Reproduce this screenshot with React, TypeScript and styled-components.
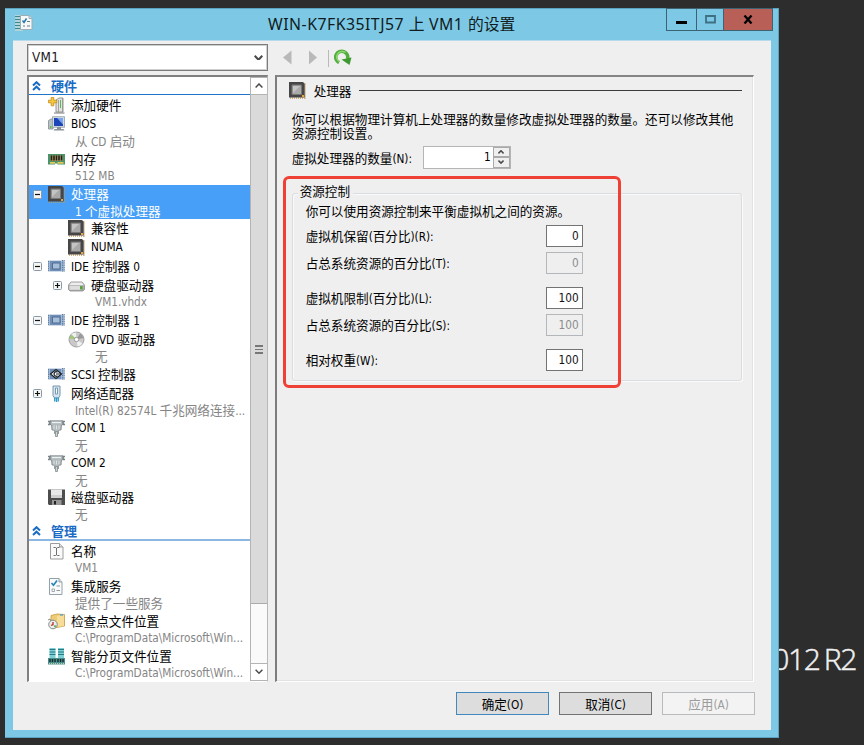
import React from 'react';
import styled, { createGlobalStyle, css } from 'styled-components';

const GlobalStyle = createGlobalStyle`
  * { box-sizing: border-box; }
  body {
    margin: 0;
    background: #2d2d2d;
    overflow: hidden;
    font-family: 'DejaVu Sans Condensed', 'DejaVu Sans', 'Noto Sans CJK SC', sans-serif;
    font-stretch: condensed;
    font-size: 12.6px;
    color: #000;
  }
`;

/* ---------- text ---------- */

const Cjk = styled.span`
  font-family: 'Noto Sans CJK SC', sans-serif;
  font-stretch: normal;
`;

const Latin = styled.span`
  font-size: 0.93em;
  letter-spacing: -0.02px;
`;

const Phrase = styled.span`
  white-space: pre;
`;

/* Chinese runs and Latin runs use different faces and sizes. */
function Mixed({ children }: { children: string }) {
  const runs = children.match(/[\u2e80-\uffef]+|[^\u2e80-\uffef]+/g) || [];
  return (
    <Phrase>
      {runs.map((run, i) =>
        /[\u2e80-\uffef]/.test(run) ? <Cjk key={i}>{run}</Cjk> : <Latin key={i}>{run}</Latin>
      )}
    </Phrase>
  );
}

/* ---------- desktop and window ---------- */

const Desktop = styled.div`
  position: relative;
  width: 864px;
  height: 745px;
  padding: 8px 0 0 5px;
  background: #2d2d2d;
  overflow: hidden;
`;

const Wallpaper = styled.div`
  position: absolute;
  right: 8px;
  top: 639px;
  font: 300 30px/40px 'Open Sans', 'Noto Sans', sans-serif;
  letter-spacing: -1.4px;
  word-spacing: -2px;
  color: #f0f0f0;
  -webkit-text-stroke: 0.5px #f0f0f0;
  white-space: nowrap;
`;

const Window = styled.div`
  position: relative;
  display: flex;
  flex-direction: column;
  width: 774px;
  height: 730px;
  padding: 0 7px 7px 8px;
  background: #7dc9e5;
  border: solid #5aa3bf;
  border-width: 1px 1px 1px 0;
`;

const TitleBar = styled.div`
  position: relative;
  display: flex;
  align-items: center;
  height: 31px;
  flex: none;
`;

const TitleIcon = styled.div`
  width: 18px;
  height: 18px;
  margin-left: 2px;
  margin-top: -3px;
`;

const Title = styled.div`
  flex: 1;
  margin-left: 235px;
  margin-top: -2px;
  font-family: 'Noto Sans', sans-serif;
  font-stretch: normal;
  font-size: 15.8px;
  line-height: 28px;
  color: #111b20;
  ${Latin} { font-size: 15.8px; letter-spacing: 0.5px; }
`;

const Controls = styled.div`
  display: flex;
  align-self: flex-start;
  height: 23px;
  margin-right: -2px;
  margin-top: -1px;
`;

const ControlButton = styled.div<{ $w: number; $close?: boolean }>`
  display: flex;
  align-items: center;
  justify-content: center;
  width: ${(p) => p.$w}px;
  border: 1px solid #3d6373;
  border-right-width: ${(p) => (p.$close ? 1 : 0)}px;
  background: ${(p) => (p.$close ? '#b86057' : '#7dc9e5')};
`;

const Client = styled.div`
  display: flex;
  flex-direction: column;
  flex: 1;
  min-height: 0;
  padding: 3px 17px 0 14px;
  background: #efefef;
  border-top: 1px solid #b5dcea;
`;

/* ---------- top strip ---------- */

const Strip = styled.div`
  display: flex;
  align-items: center;
  height: 27px;
`;

const Combo = styled.div`
  display: flex;
  align-items: center;
  justify-content: space-between;
  width: 241px;
  height: 27px;
  padding: 0 4px 0 4px;
  background: #fff;
  border: 1px solid #7c7c7c;
  box-shadow: inset 0 0 0 1px #d0d0d0;
  color: #1c1c1c;
  ${Latin} { font-size: 13.4px; letter-spacing: 0.3px; }
`;

const Nav = styled.div`
  display: flex;
  align-items: center;
  height: 20px;
  margin-left: 15px;
`;

const NavRule = styled.div`
  width: 1px;
  height: 17px;
  margin: 2px 5px 0 11px;
  background: #b9b9b9;
`;

/* ---------- panels ---------- */

const Panels = styled.div`
  display: flex;
  gap: 7px;
  height: 607px;
  margin-top: 4px;
`;

const TreePanel = styled.div`
  display: flex;
  width: 241px;
  border: solid #808080;
  border-width: 2px 1px 1px 2px;
  border-right-color: #b8b8b8;
  border-bottom-color: #fff;
  background: #fff;
`;

const Tree = styled.div`
  flex: 1;
  min-width: 0;
  overflow: hidden;
`;

const Section = styled.div<{ $soft?: boolean }>`
  display: flex;
  align-items: center;
  height: ${(p) => (p.$soft ? 17.4 : 18)}px;
  margin-bottom: ${(p) => (p.$soft ? 1.6 : 1)}px;
  padding-left: 3px;
  border-bottom: ${(p) => (p.$soft ? '2px solid #8db8e2' : '1px solid #1d74c8')};
  color: #1a6bc4;
  font-weight: 700;
  font-size: 13px;
  svg { margin-right: 10px; }
`;

const Row = styled.div<{ $level: number; $double?: boolean; $selected?: boolean }>`
  display: flex;
  height: ${(p) => (p.$double ? 34.85 : 18.95)}px;
  padding-left: ${(p) => (p.$level ? 22 : 2)}px;
  ${(p) =>
    p.$selected &&
    css`
      background: #479ff8;
      color: #fff;
    `}
`;

const Toggle = styled.div`
  width: 15px;
  flex: none;
  padding: 5px 0 0 2px;
  svg { display: block; }
`;

const RowIcon = styled.div`
  width: 17px;
  height: 17px;
  flex: none;
  margin: 1px 6px 0 2px;
  svg { display: block; }
`;

const RowText = styled.div`
  min-width: 0;
`;

const RowTitle = styled.div`
  height: 18px;
  line-height: 18.6px;
`;

const RowNote = styled.div<{ $selected?: boolean }>`
  height: 15px;
  line-height: 15px;
  margin-left: 4px;
  color: ${(p) => (p.$selected ? '#fff' : '#858585')};
`;

const ScrollBar = styled.div`
  display: flex;
  flex-direction: column;
  width: 17px;
  border-left: 1px solid #b4b4b4;
  background: #fafafa;
`;

const ScrollButton = styled.div`
  display: flex;
  align-items: center;
  justify-content: center;
  height: 18px;
  border: solid #b4b4b4;
  border-width: 1px 0;
  background: #fff;
`;

const Thumb = styled.div`
  display: flex;
  align-items: center;
  justify-content: center;
  height: 509px;
  margin-bottom: auto;
  background: #dadada;
  border-bottom: 1px solid #ababab;
`;

const Grip = styled.div`
  width: 8px;
  height: 9px;
  border: solid #777;
  border-width: 2px 0;
  background: linear-gradient(#dadada 2px, #777 2px, #777 3px, #dadada 3px);
`;

const Details = styled.div`
  width: 480px;
  padding: 5px 11px 0 14px;
  border: solid #fff;
  border-width: 2px 1px 1px 2px;
  border-top-color: #858585;
  border-left-color: #7d7d7d;
  box-shadow: inset -1px -1px 0 #e2e2e2;
`;

const Heading = styled.div`
  display: flex;
  align-items: center;
  height: 17px;
  margin-left: -2px;
  line-height: 17px;
  gap: 8px;
  svg { display: block; }
`;

const HeadingRule = styled.div`
  flex: 1;
  height: 1px;
  background: #3c3c3c;
`;

const Description = styled.div`
  margin: 13px 0 0 1px;
`;

const DescriptionLine = styled.div`
  height: 14px;
  line-height: 14px;
  letter-spacing: 0.03px;
  white-space: nowrap;
`;

const CountRow = styled.div`
  display: flex;
  align-items: center;
  height: 24px;
  margin: 5px 0 0 1px;
`;

const CountLabel = styled.div`
  width: 131px;
`;

const Spinner = styled.div`
  display: flex;
  width: 88px;
  height: 23px;
  border: 1px solid #b5b5b5;
  background: #fff;
`;

const SpinnerValue = styled.div`
  flex: 1;
  padding-right: 2px;
  text-align: right;
  line-height: 19px;
`;

const SpinnerKeys = styled.div`
  display: flex;
  flex-direction: column;
  width: 17px;
`;

const SpinnerKey = styled.div`
  display: flex;
  flex: 1;
  align-items: center;
  justify-content: center;
  border: 1px solid #aaa;
  background: #efefef;
`;

const Group = styled.section`
  position: relative;
  height: 188px;
  margin: 24px 0 0 1px;
  padding: 1px 0 0 13px;
  border: 1px solid #d9dde0;
  border-radius: 3px;
  box-shadow: inset 1px 1px 0 #fafafa, 1px 1px 0 #fafafa;
`;

const Legend = styled.div`
  width: 55px;
  height: 16px;
  margin: -12px 0 0 -8px;
  padding-left: 2px;
  line-height: 16px;
  background: #efefef;
`;

const Intro = styled.div`
  height: 20px;
  line-height: 20px;
  margin-top: 2px;
`;

const Field = styled.div<{ $gap: number }>`
  display: flex;
  align-items: center;
  height: 23px;
  margin-top: ${(p) => p.$gap}px;
`;

const FieldLabel = styled.div`
  width: 240px;
`;

const FieldBox = styled.div<{ $disabled?: boolean }>`
  width: 37px;
  height: 22px;
  padding-right: 3px;
  text-align: right;
  line-height: 20px;
  color: ${(p) => (p.$disabled ? '#8b8b8b' : '#111')};
  background: ${(p) => (p.$disabled ? '#efefef' : '#fff')};
  border: 1px solid ${(p) => (p.$disabled ? '#b4b7b9' : '#737373')};
`;

const Highlight = styled.div`
  position: absolute;
  left: -10px;
  top: -18px;
  width: 338px;
  height: 212px;
  border: 3px solid #ef4036;
  border-radius: 6px;
`;

/* ---------- footer ---------- */

const Footer = styled.div`
  display: flex;
  justify-content: flex-end;
  gap: 10px;
  margin-top: 10px;
  margin-right: -1px;
`;

const PushButton = styled.div<{ $kind?: 'default' | 'disabled' }>`
  width: 93px;
  height: 23px;
  line-height: 21px;
  text-align: center;
  background: ${(p) => (p.$kind === 'disabled' ? '#f3f3f3' : '#dddddd')};
  color: ${(p) => (p.$kind === 'disabled' ? '#9c9c9c' : '#000')};
  border: 1px solid
    ${(p) => (p.$kind === 'default' ? '#4088bd' : p.$kind === 'disabled' ? '#b7bbbe' : '#737373')};
`;

/* ---------- icons ---------- */

const Svg = ({ children }: { children: React.ReactNode }) => (
  <svg width="17" height="17" viewBox="0 0 17 17">{children}</svg>
);

const ChipIcon = () => (
  <Svg>
    <path d="M1 16.2h15M16.2 1.5v15" stroke="#c69a50" strokeWidth="1.3" strokeDasharray="1 1" />
    <path d="M0 0h14l1.7 1.7V15.5H0z" fill="#464646" />
    <path d="M3 3h9.5v9.5H3z" fill="#a9a9a9" stroke="#777" />
    <path d="M4 4h7L4 11z" fill="#c4c4c4" />
    <path d="M13 13h2v2h-2z" fill="#e7a73a" />
  </Svg>
);

const AddHardwareIcon = () => (
  <Svg>
    <path d="M8 3l3-2h4v14H8z" fill="#e2e4e2" stroke="#888c88" strokeWidth=".9" />
    <path d="M10.500 3v12M14.500 1v14" stroke="#8f948f" strokeWidth=".8" />
    <path d="M12 3h1v8h-1z" fill="#5cb947" />
    <path d="M6 16h10.5" stroke="#777" />
    <path d="M3.2.5h2.6v2.7h3v2.6h-3v3H3.2v-3H.4V3.2h2.8z" fill="#f6c93c" stroke="#c48a16" strokeWidth=".8" />
  </Svg>
);

const BiosIcon = () => (
  <Svg>
    <path d="M.5 4.5L3 3h2v10H.5z" fill="#b9c1c7" stroke="#808b93" strokeWidth=".8" />
    <path d="M2 10h1.4v2H2z" fill="#69bd45" />
    <path d="M4.5.7h12v10.6h-12z" fill="#d5dde2" stroke="#8f9aa3" strokeWidth=".8" />
    <path d="M6 2h9v8H6z" fill="#1c45b8" />
    <path d="M9 2h6v6.5z" fill="#7aa5ec" />
    <path d="M9 11h4v2H9zM6.5 13h9l1 1.5h-11z" fill="#8b949b" />
  </Svg>
);

const MemoryIcon = () => (
  <Svg>
    <path d="M0 3h17v10.5H9.5v-1H7v1H0z" fill="#4c9369" />
    <path d="M2.5 4.5h12v5.500h-12z" fill="#b49a60" />
    <path d="M3.5 4.5v5M6 4.5v5M8.5 4.5v5M11 4.5v5M13.5 4.5v5" stroke="#1f1f1b" strokeWidth="1.6" />
    <path d="M2 11.8h5M9.5 11.8h6" stroke="#e2c95c" strokeWidth="1.8" />
  </Svg>
);

const BoardIcon = ({ scsi }: { scsi?: boolean }) => (
  <Svg>
    <path d="M0 2.5h16.5v11H0z" fill="#a3b9d3" />
    <path d="M.5 3v10M14.5 2v12M16.2 2v12" stroke="#5c7ba4" strokeDasharray="1.3 1" />
    <path d="M2 3h11v10H2z" fill="#718fb6" />
    {scsi ? (
      <g fill="#fff" stroke="#161e28" strokeWidth="1.2">
        <path d="M2.500 8L8 3.500 13.500 8 8 12.500z" />
        <path d="M9.500 6.200A2.200 2.200 0 1 0 9.500 9.800M8 8h5" fill="none" />
      </g>
    ) : (
      <path d="M4.5 5h7.5v6H4.5z" fill="#a7bed8" stroke="#4f6d96" />
    )}
  </Svg>
);

const DriveIcon = () => (
  <Svg>
    <path d="M3 5h11l2.6 3.2v4L15 14H2L.4 12.2v-4z" fill="#aaa" stroke="#8b8b8b" strokeWidth=".8" />
    <path d="M3.2 5.5h10.6l2 2.8H1.2z" fill="#eee" />
    <path d="M1.5 9h12v3.8h-12z" fill="#dedede" />
    <path d="M12 9h2.5v3.5H12z" fill="#5ca43d" />
  </Svg>
);

const DiscIcon = () => (
  <Svg>
    <circle cx="8.5" cy="8.5" r="7.5" fill="#c9c9c9" stroke="#a0a0a0" />
    <path d="M8.5 8.5L3 3.5A7 7 0 0 1 8 1.4zM8.5 8.5l6 4A7 7 0 0 1 9.5 15.5z" fill="#efefef" />
    <path d="M8.5 8.5L1.5 7.5a7 7 0 0 1 2-4z" fill="#9fc777" />
    <path d="M8.5 8.5l7-1.5A7 7 0 0 0 12 2.4z" fill="#999" />
    <circle cx="8.5" cy="8.5" r="2.2" fill="#fff" stroke="#999" />
  </Svg>
);

const NetworkIcon = () => (
  <Svg>
    <path d="M5 1h7v9.500L10.500 13h-4L5 10.500z" fill="#d3e4ef" stroke="#7897ab" />
    <path d="M7.500 3h2v6h-2z" fill="#fff" stroke="#6d8fa6" strokeWidth=".9" />
    <path d="M6.700 12.500v4M8.500 12.500v4.500M10.300 12.500v4" stroke="#2d9ac6" strokeWidth="1.300" />
  </Svg>
);

const ComIcon = () => (
  <Svg>
    <path d="M2 .8h13l.8 3-2.300 1.200-.5 5h-2l-1 2H7l-1-2H4l-.5-5L1.200 3.800z" fill="#b2babc" stroke="#7a8486" strokeWidth=".8" />
    <path d="M4 2.500h9" stroke="#eef1f1" strokeWidth="1.300" />
    <path d="M0 1.500h2v3H0M17 1.500h-2v3h2" fill="none" stroke="#7a8486" strokeWidth="1.300" />
    <path d="M6 5.500v4M8.500 5.500v4M11 5.500v4" stroke="#dfe4e4" />
    <path d="M6.500 11.500v2.500M10.500 11.500v2.500M7.500 11.500h2v5h-2z" fill="#cdd2d3" stroke="#8a9395" strokeWidth=".9" />
  </Svg>
);

const FloppyIcon = () => (
  <Svg>
    <path d="M0 .5h17V16H1L0 15z" fill="#4d4d4d" />
    <path d="M3 .5h11v8H3z" fill="#e9e9e9" />
    <path d="M3 6h11v3H3z" fill="#d0d0d0" />
    <path d="M4 11h9.500v5H4z" fill="#989898" />
    <path d="M6 12h2v3.500H6z" fill="#222" />
  </Svg>
);

const NameIcon = () => (
  <Svg>
    <path d="M2.500.5h9l3.500 3.500v12H2.500z" fill="#fafafa" stroke="#9c9c9c" />
    <path d="M11.500.5V4H15" fill="#ddd" stroke="#9c9c9c" />
    <path d="M5.500 4.500h2l1 .7 1-.7h2M8.500 5v7M5.500 12.500h2l1-.7 1 .7h2" fill="none" stroke="#606060" strokeWidth=".9" />
  </Svg>
);

const ServicesIcon = () => (
  <Svg>
    <path d="M1.500.5h9.500l3 3.500v12.500H1.500z" fill="#f8fafb" stroke="#93a2a8" />
    <path d="M11 .5V4h3" fill="#d8e0e3" stroke="#93a2a8" />
    <path d="M3.500 5l2 2.200L9 2.500" fill="none" stroke="#2885b8" strokeWidth="1.700" />
    <path d="M8.500 8H12M8.500 12.500H12" stroke="#8b979c" />
    <path d="M4 11h2.500v2.500H4z" fill="#fff" stroke="#8b979c" strokeWidth=".8" />
  </Svg>
);

const CheckpointIcon = () => (
  <Svg>
    <path d="M3 2.500L9 1l7.500.500V13L9 14.500H3z" fill="#eecb76" stroke="#c79b3f" strokeWidth=".8" />
    <path d="M9 3l7-1v11l-7 1z" fill="#f7dd98" />
    <path d="M12 1.200h3v1.500h-3z" fill="#5ea6d2" />
    <circle cx="5" cy="11.500" r="4.300" fill="#eceeed" stroke="#858c8a" />
    <path d="M5 9v2.500L3 12.500" fill="none" stroke="#c22f27" strokeWidth="1.300" />
    <path d="M5.500 12.500h3l-1.500 2z" fill="#3e9b45" />
    <path d="M0 7l2-1 1 2" fill="none" stroke="#858c8a" />
  </Svg>
);

const PagingIcon = () => (
  <Svg>
    <path d="M1.500 0h6v10h-6zM10 0h6v10h-6z" fill="#7ad0d2" />
    <path d="M1.500 1.500h6M1.500 4h6M1.500 6.500h6M10 1.500h6M10 4h6M10 6.500h6" stroke="#297b82" />
    <path d="M0 10h17v6.500H0z" fill="#4b8f8d" />
    <path d="M2 11v3M4.500 11v3M7 11v3M10 11v3M12.500 11v3M15 11v3" stroke="#16292b" strokeWidth="1.400" />
    <path d="M1 15.700h15" stroke="#d4e0c1" strokeDasharray="1 1" />
  </Svg>
);

const SettingsIcon = () => (
  <svg width="18" height="18" viewBox="0 0 18 18">
    <path d="M0 1h8v16H0z" fill="#b0d4da" />
    <path d="M0 2.500h6M0 5.500h6M0 8.500h6M0 11.500h6M0 14.500h6" stroke="#3f8790" />
    <path d="M5.500 1.500h8.500l3 3V15.500H5.500z" fill="#f5f8f9" stroke="#9daeb4" />
    <path d="M14 1.500v3h3" fill="#d3dde0" stroke="#9daeb4" />
    <path d="M7.500 6.500l1.500 2 2.500-4" fill="none" stroke="#2477ab" strokeWidth="1.500" />
    <path d="M12 7.500h3M8 12h2M12 12h3" stroke="#6b7c83" />
  </svg>
);

const ToggleBox = ({ open }: { open: boolean }) => (
  <svg width="9" height="9" viewBox="0 0 9 9">
    <rect x=".5" y=".5" width="8" height="8" rx="1" fill="#f6f6f4" stroke="#8899aa" />
    <path d={open ? 'M2 4.500h5' : 'M2 4.500h5M4.500 2v5'} stroke="#111" strokeWidth="1.200" />
  </svg>
);

const DoubleUp = () => (
  <svg width="9" height="10" viewBox="0 0 9 10" fill="none" stroke="#1a6bc4" strokeWidth="2">
    <path d="M1 4.500l3.500-3.300L8 4.500M1 9l3.500-3.300L8 9" />
  </svg>
);

const Chevron = ({ up, w = 8, weight = 1.5 }: { up?: boolean; w?: number; weight?: number }) => (
  <svg width={w} height={w * 0.65} viewBox="0 0 8 5.200" fill="none" stroke="#4a4a4a" strokeWidth={weight}>
    <path d={up ? 'M.6 4.500L4 1l3.400 3.500' : 'M.6.7L4 4.200 7.400.7'} />
  </svg>
);

/* ---------- data ---------- */

type Item = {
  icon: React.ReactNode;
  title: string;
  note?: string;
  level?: number;
  toggle?: 'open' | 'closed';
  selected?: boolean;
};

const hardware: Item[] = [
  { icon: <AddHardwareIcon />, title: '添加硬件' },
  { icon: <BiosIcon />, title: 'BIOS', note: '从 CD 启动' },
  { icon: <MemoryIcon />, title: '内存', note: '512 MB' },
  { icon: <ChipIcon />, title: '处理器', note: '1 个虚拟处理器', toggle: 'open', selected: true },
  { icon: <ChipIcon />, title: '兼容性', level: 1 },
  { icon: <ChipIcon />, title: 'NUMA', level: 1 },
  { icon: <BoardIcon />, title: 'IDE 控制器 0', toggle: 'open' },
  { icon: <DriveIcon />, title: '硬盘驱动器', note: 'VM1.vhdx', level: 1, toggle: 'closed' },
  { icon: <BoardIcon />, title: 'IDE 控制器 1', toggle: 'open' },
  { icon: <DiscIcon />, title: 'DVD 驱动器', note: '无', level: 1 },
  { icon: <BoardIcon scsi />, title: 'SCSI 控制器' },
  { icon: <NetworkIcon />, title: '网络适配器', note: 'Intel(R) 82574L 千兆网络连接...', toggle: 'closed' },
  { icon: <ComIcon />, title: 'COM 1', note: '无' },
  { icon: <ComIcon />, title: 'COM 2', note: '无' },
  { icon: <FloppyIcon />, title: '磁盘驱动器', note: '无' },
];

const management: Item[] = [
  { icon: <NameIcon />, title: '名称', note: 'VM1' },
  { icon: <ServicesIcon />, title: '集成服务', note: '提供了一些服务' },
  { icon: <CheckpointIcon />, title: '检查点文件位置', note: 'C:\\ProgramData\\Microsoft\\Win...' },
  { icon: <PagingIcon />, title: '智能分页文件位置', note: 'C:\\ProgramData\\Microsoft\\Win...' },
];

const fields = [
  { label: '虚拟机保留(百分比)(R):', value: '0', gap: 3 },
  { label: '占总系统资源的百分比(T):', value: '0', gap: 4, disabled: true },
  { label: '虚拟机限制(百分比)(L):', value: '100', gap: 12 },
  { label: '占总系统资源的百分比(S):', value: '100', gap: 4, disabled: true },
  { label: '相对权重(W):', value: '100', gap: 12 },
];

const TreeItem = ({ item }: { item: Item }) => (
  <Row $level={item.level || 0} $double={!!item.note} $selected={item.selected}>
    <Toggle>{item.toggle && <ToggleBox open={item.toggle === 'open'} />}</Toggle>
    <RowIcon>{item.icon}</RowIcon>
    <RowText>
      <RowTitle><Mixed>{item.title}</Mixed></RowTitle>
      {item.note && <RowNote $selected={item.selected}><Mixed>{item.note}</Mixed></RowNote>}
    </RowText>
  </Row>
);

export default function App() {
  return (
    <Desktop>
      <GlobalStyle />
      <Wallpaper>2012 R2</Wallpaper>
      <Window>
        <TitleBar>
          <TitleIcon><SettingsIcon /></TitleIcon>
          <Title><Mixed>WIN-K7FK35ITJ57 上 VM1 的设置</Mixed></Title>
          <Controls>
            <ControlButton $w={30}>
              <svg width="11" height="11"><path d="M0 8.500h11" stroke="#000" strokeWidth="3" /></svg>
            </ControlButton>
            <ControlButton $w={27}>
              <svg width="11" height="9"><path d="M1 1h9v6.500H1z" fill="none" stroke="#3f6f82" strokeWidth="1.800" /></svg>
            </ControlButton>
            <ControlButton $w={50} $close>
              <svg width="10" height="9"><path d="M1.500.5l7 8M8.500.5l-7 8" stroke="#000" strokeWidth="2.300" /></svg>
            </ControlButton>
          </Controls>
        </TitleBar>
        <Client>
          <Strip>
            <Combo><Mixed>VM1</Mixed><Chevron w={9} weight={1.9} /></Combo>
            <Nav>
              <svg width="34" height="15">
                <path d="M8.500.5v14L0 7.500z" fill="#b9b9b9" />
                <path d="M26 .5v14l8-7z" fill="#b9b9b9" />
              </svg>
              <NavRule />
              <svg width="18" height="17" viewBox="0 0 18 17">
                <path d="M5 13.600A6 6 0 1 1 13.500 10" fill="none" stroke="#50ad3e" strokeWidth="3.600" />
                <path d="M5 12.600A5.500 5.500 0 0 1 11.500 3.500" fill="none" stroke="#8ed56d" strokeWidth="1.500" />
                <path d="M7.500 10.500L17.500 8.500 15.500 16z" fill="#3d9a31" />
              </svg>
            </Nav>
          </Strip>
          <Panels>
            <TreePanel>
              <Tree>
                <Section><DoubleUp /><Mixed>硬件</Mixed></Section>
                {hardware.map((item) => <TreeItem key={item.title} item={item} />)}
                <Section $soft><DoubleUp /><Mixed>管理</Mixed></Section>
                {management.map((item) => <TreeItem key={item.title} item={item} />)}
              </Tree>
              <ScrollBar>
                <ScrollButton><Chevron up /></ScrollButton>
                <Thumb><Grip /></Thumb>
                <ScrollButton><Chevron /></ScrollButton>
              </ScrollBar>
            </TreePanel>
            <Details>
              <Heading><ChipIcon /><Mixed>处理器</Mixed><HeadingRule /></Heading>
              <Description>
                <DescriptionLine>
                  <Mixed>你可以根据物理计算机上处理器的数量修改虚拟处理器的数量。还可以修改其他</Mixed>
                </DescriptionLine>
                <DescriptionLine><Mixed>资源控制设置。</Mixed></DescriptionLine>
              </Description>
              <CountRow>
                <CountLabel><Mixed>虚拟处理器的数量(N):</Mixed></CountLabel>
                <Spinner>
                  <SpinnerValue><Mixed>1</Mixed></SpinnerValue>
                  <SpinnerKeys>
                    <SpinnerKey><Chevron up w={6} weight={2} /></SpinnerKey>
                    <SpinnerKey><Chevron w={6} weight={2} /></SpinnerKey>
                  </SpinnerKeys>
                </Spinner>
              </CountRow>
              <Group>
                <Legend><Mixed>资源控制</Mixed></Legend>
                <Intro><Mixed>你可以使用资源控制来平衡虚拟机之间的资源。</Mixed></Intro>
                {fields.map((f) => (
                  <Field key={f.label} $gap={f.gap}>
                    <FieldLabel><Mixed>{f.label}</Mixed></FieldLabel>
                    <FieldBox $disabled={f.disabled}><Mixed>{f.value}</Mixed></FieldBox>
                  </Field>
                ))}
                <Highlight />
              </Group>
            </Details>
          </Panels>
          <Footer>
            <PushButton $kind="default"><Mixed>确定(O)</Mixed></PushButton>
            <PushButton><Mixed>取消(C)</Mixed></PushButton>
            <PushButton $kind="disabled"><Mixed>应用(A)</Mixed></PushButton>
          </Footer>
        </Client>
      </Window>
    </Desktop>
  );
}
